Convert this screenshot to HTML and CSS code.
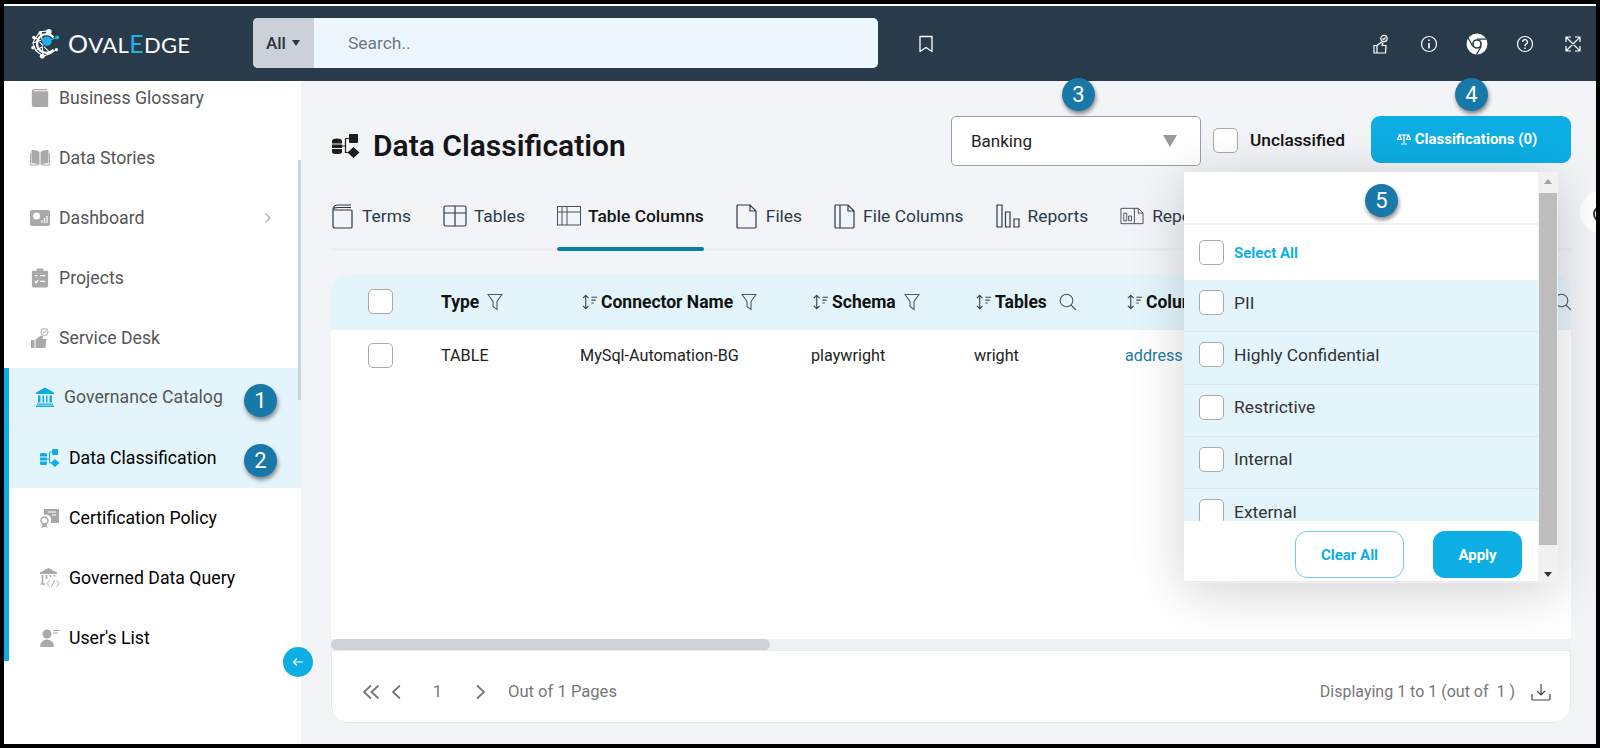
FILE: index.html
```html
<!DOCTYPE html>
<html lang="en">
<head>
<meta charset="utf-8">
<title>Data Classification</title>
<link rel="stylesheet" href="styles.css">
</head>
<body>
<div class="frame">
  <header class="topbar">
    <div class="logo">
      <svg class="logo-mark" viewBox="0 0 32 32" fill="none" stroke="#fff" stroke-width="1.2">
        <path d="M10 3 L5 9 L2 15 L5 23 L13 29 L21 26 L27 22 M10 3 L18 2 M5 9 L13 18 M2 15 L11 12 M5 23 L12 19 L13 29 M21 26 L14 19 M10 3 L12 12"/>
        <path d="M24 9 A10 10 0 1 0 24 22" stroke-width="2.4"/>
        <circle cx="17" cy="13" r="5" fill="#1fb0ea" stroke="none"/>
        <path d="M17 13 L28 9" stroke="#1fb0ea" stroke-width="1.4"/>
        <circle cx="28" cy="9" r="2" fill="#1fb0ea" stroke="none"/>
        <circle cx="19" cy="3" r="3" fill="#fff" stroke="none"/><circle cx="10" cy="4" r="2" fill="#fff" stroke="none"/>
        <circle cx="3" cy="9" r="1.8" fill="#fff" stroke="none"/><circle cx="2" cy="20" r="1.8" fill="#fff" stroke="none"/>
        <circle cx="12" cy="29" r="2.6" fill="#fff" stroke="none"/><circle cx="27" cy="22" r="1.8" fill="#fff" stroke="none"/>
      </svg>
      <span class="logo-text"><span class="logo-o">O</span>VAL<span class="logo-e">E</span>DGE</span>
    </div>
    <div class="search">
      <div class="search-scope">All <span class="caret"></span></div>
      <div class="search-input">Search..</div>
    </div>
    <svg class="bookmark" viewBox="0 0 16 18" fill="none" stroke="#fff" stroke-width="1.3"><path d="M2 1.5 H14 V16.5 L8 12.5 L2 16.5 Z" stroke-linejoin="round"/></svg>
    <div class="top-icons">
      <svg class="top-icon" viewBox="0 0 20 20" fill="none" stroke="#fff" stroke-width="1.2"><circle cx="13" cy="4.5" r="3.2"/><path d="M11.5 4.5 L12.7 5.7 L14.6 3.4"/><path d="M3 11.5 H6 V19 H3 Z M6 11.5 L10 8.5 L12 9.5 L11 11.5 H15 L14.5 19 H6"/></svg>
      <svg class="top-icon" viewBox="0 0 20 20" fill="none" stroke="#fff" stroke-width="1.2"><circle cx="10" cy="10" r="7.5"/><path d="M10 9 V14.5 M10 5.5 V7" stroke-width="1.6"/></svg>
      <svg class="top-icon chrome" viewBox="0 0 20 20"><circle cx="10" cy="10" r="9.5" fill="#fff"/><circle cx="10" cy="10" r="4.4" fill="#293a4a"/><circle cx="10" cy="10" r="2.9" fill="#fff"/><path d="M10 5.6 H18.5 M14 12 L9.5 19.5 M6.2 12.2 L2 4.5" stroke="#293a4a" stroke-width="1.1"/></svg>
      <svg class="top-icon" viewBox="0 0 20 20" fill="none" stroke="#fff" stroke-width="1.2"><circle cx="10" cy="10" r="7.5"/><path d="M7.6 8 A2.4 2.4 0 1 1 11 10.2 Q10 10.8 10 12.3 M10 13.6 V15" stroke-width="1.4"/></svg>
      <svg class="top-icon" viewBox="0 0 20 20" fill="none" stroke="#fff" stroke-width="1.2"><path d="M3 3 L17 17 M17 3 L3 17 M3 8 V3 H8 M12 3 H17 V8 M3 12 V17 H8 M17 12 V17 H12"/></svg>
    </div>
  </header>

  <div class="body">
    <nav class="sidebar">
      <div class="nav-clip">
        <div class="nav-list">
          <div class="nav-item"><svg class="nav-icon" viewBox="0 0 20 22"><path d="M1 4 Q1 1 4 1 H18 V2.5 H4 Q3 2.5 3 3.5 H19 V21 H3 Q1 21 1 19 Z" fill="#a9a9a9"/></svg><span>Business Glossary</span></div>
          <div class="nav-item"><svg class="nav-icon" viewBox="0 0 20 18"><path d="M9.5 3 Q6 .5 1.5 1 V14 Q6 14 9.5 16 Z M10.5 3 Q14 .5 18.5 1 V14 Q14 14 10.5 16 Z" fill="#a9a9a9"/><path d="M.5 4 V16 H8.5 M19.5 4 V16 H11.5" fill="none" stroke="#a9a9a9"/></svg><span>Data Stories</span></div>
          <div class="nav-item"><svg class="nav-icon" viewBox="0 0 20 16"><rect width="20" height="16" rx="2" fill="#a9a9a9"/><circle cx="6.5" cy="6" r="3.5" fill="#fff"/><path d="M12 13 V10 M14.5 13 V8 M17 13 V6" stroke="#fff" stroke-width="1.2"/></svg><span>Dashboard</span><svg class="nav-chevron" viewBox="0 0 8 12" fill="none" stroke="#a9a9a9" stroke-width="1.2"><path d="M1.5 1.5 L6 6 L1.5 10.5"/></svg></div>
          <div class="nav-item"><svg class="nav-icon" viewBox="0 0 18 21"><path d="M2 3 H5.5 V1.5 Q5.5 .5 6.5 .5 H11.5 Q12.5 .5 12.5 1.5 V3 H16 Q17.5 3 17.5 4.5 V19 Q17.5 20.5 16 20.5 H2 Q.5 20.5 .5 19 V4.5 Q.5 3 2 3 Z" fill="#a9a9a9"/><path d="M3.5 8 H6.5 M9 8 H14.5 M3.5 14 L5 15.5 L7 12.5 M9 14 H14.5" stroke="#fff" stroke-width="1.4" fill="none"/></svg><span>Projects</span></div>
          <div class="nav-item"><svg class="nav-icon" viewBox="0 0 20 20"><circle cx="14.5" cy="4" r="3.6" fill="none" stroke="#a9a9a9" stroke-width="1"/><path d="M12.8 4 L14 5.2 L16 2.8" fill="none" stroke="#a9a9a9"/><path d="M1 12 H4.5 V20 H1 Z M5.5 11.5 L11 7.5 L13.5 8.5 L12 11 H16.5 L15.5 20 H5.5 Z" fill="#a9a9a9"/></svg><span>Service Desk</span></div>
          <div class="nav-group">
            <div class="nav-item parent"><svg class="nav-icon" viewBox="0 0 20 20" fill="#0caee3"><path d="M10 .5 L19 5.5 V7 H1 V5.5 Z"/><path d="M3 8.5 H5.5 V15.5 H3 Z M7.5 8.5 H9 V15.5 H7.5 Z M11 8.5 H12.5 V15.5 H11 Z M14.5 8.5 H17 V15.5 H14.5 Z M2 16.5 H18 V17.8 H2 Z M1 18.5 H19 V20 H1 Z"/></svg><span>Governance Catalog</span></div>
            <div class="nav-item child active"><svg class="nav-icon" viewBox="0 0 20 18"><g fill="#0caee3"><rect x="0" y="4" width="7" height="12" rx="1.6"/><rect x="12" y="0" width="6" height="6" rx=".8"/><path d="M15 10 L19.5 14 L15 18 L10.5 14 Z"/></g><path d="M7 10 H9.5 M9.5 3 V14 H11 M9.5 3 H12" stroke="#0caee3" fill="none"/><path d="M0 8 H7 M0 12 H7" stroke="#e3f5fb"/></svg><span>Data Classification</span></div>
            <div class="nav-item child"><svg class="nav-icon" viewBox="0 0 20 20" fill="#a9a9a9"><path d="M4 1 H19 V15 H11 V10 A5 5 0 0 0 4 7 Z"/><path d="M8 4 H16 M12 7 H16" stroke="#fff" stroke-width="1.2"/><circle cx="4.5" cy="12.5" r="3.5" fill="none" stroke="#a9a9a9" stroke-width="1.4"/><path d="M2.5 16 L1.5 20 L4.5 18.5 L7.5 20 L6.5 16 Z"/></svg><span>Certification Policy</span></div>
            <div class="nav-item child"><svg class="nav-icon" viewBox="0 0 20 20"><path d="M8.5 0 L17 4.5 V6 H0 V4.5 Z" fill="#a9a9a9"/><path d="M2.5 7 V15 M6.5 7 V11 M10.5 7 V9 M14.5 7 V8.5 M.5 16 H5" stroke="#a9a9a9" stroke-width="1.6" fill="none"/><path d="M9.5 12.5 L7 15.5 L9.5 18.5 M16.5 12.5 L19 15.5 L16.5 18.5 M14.5 12 L11.5 19" stroke="#a9a9a9" fill="none"/></svg><span>Governed Data Query</span></div>
            <div class="nav-item child"><svg class="nav-icon" viewBox="0 0 20 18" fill="#a9a9a9"><circle cx="7" cy="5" r="4.5"/><path d="M0 18 Q0 11 7 10.5 Q14 11 14 18 Z"/><path d="M13 1.5 H20 M13 4 H18" stroke="#a9a9a9" fill="none"/></svg><span>User's List</span></div>
          </div>
        </div>
      </div>
      <div class="side-scroll"></div>
    </nav>

    <main class="main">
      <div class="title-row">
        <div class="title-group">
          <svg class="title-icon" viewBox="0 0 28 24"><g fill="#1d1d1d"><path d="M0 7 Q0 4.5 5 4.5 Q10 4.5 10 7 V9.5 H0 Z M0 10.5 H10 V14 H0 Z M0 15 H10 V18 Q10 20 5 20 Q0 20 0 18 Z"/><rect x="17" y="0" width="9" height="9" rx="1"/><path d="M21.5 13 L27.5 18.5 L21.5 24 L15.5 18.5 Z"/></g><path d="M10 12 H13.5 M13.5 4.5 V18.5 H16 M13.5 4.5 H17" fill="none" stroke="#1d1d1d" stroke-width="1.2"/></svg>
          <h1 class="title">Data Classification</h1>
        </div>
        <div class="select"><span>Banking</span><span class="select-arrow"></span></div>
        <label class="unclassified"><span class="check"></span><span>Unclassified</span></label>
        <button class="classify-btn"><svg class="scale" viewBox="0 0 14 12" fill="none" stroke="#fff" stroke-width="1.2"><path d="M7 1 V10 M4 11 H10 M1.5 2 H12.5 M2.5 2 L.5 6.5 H4.5 Z M11.5 2 L9.5 6.5 H13.5 Z"/></svg>Classifications (0)</button>
      </div>

      <div class="tabs">
        <div class="tab"><svg class="tab-icon i-terms" viewBox="0 0 21 25" fill="none" stroke="#2b3a4a" stroke-width="1.2"><path d="M1 6 Q1 1 6 1 H19 M1 6 Q1 3.5 6 3.5 H19 M1 6 H19 Q20 6 20 7 V23 Q20 24 19 24 H3 Q1 24 1 22 Z"/></svg>Terms</div>
        <div class="tab"><svg class="tab-icon i-tables" viewBox="0 0 24 22" fill="none" stroke="#2b3a4a" stroke-width="1.2"><rect x="1" y="1" width="22" height="20" rx="1.5"/><path d="M1 8 H23 M12 1 V21"/></svg>Tables</div>
        <div class="tab active"><svg class="tab-icon i-cols" viewBox="0 0 24 20" fill="none" stroke="#44505c" stroke-width="1"><rect x=".5" y=".5" width="23" height="18.5"/><path d="M.5 6 H23.5 M5 .5 V19 M10 .5 V19"/></svg>Table Columns</div>
        <div class="tab"><svg class="tab-icon i-files" viewBox="0 0 21 25" fill="none" stroke="#2b3a4a" stroke-width="1.2"><path d="M1 2 Q1 1 2 1 H14 L20 7 V23 Q20 24 19 24 H2 Q1 24 1 23 Z M14 1 V7 H20"/></svg>Files</div>
        <div class="tab"><svg class="tab-icon i-fcols" viewBox="0 0 21 25" fill="none" stroke="#2b3a4a" stroke-width="1.2"><path d="M1 2 Q1 1 2 1 H14 L20 7 V23 Q20 24 19 24 H2 Q1 24 1 23 Z M14 1 V7 H20 M6 1 V24"/></svg>File Columns</div>
        <div class="tab"><svg class="tab-icon i-rep" viewBox="0 0 24 24" fill="none" stroke="#2b3a4a" stroke-width="1.2"><path d="M1 1 H6 V23 H1 Z M9.5 8 H14 V23 H9.5 Z M18 15 H23 V23 H18 Z"/></svg>Reports</div>
        <div class="tab"><svg class="tab-icon i-rep" viewBox="0 0 25 18" fill="none" stroke="#44505c" stroke-width="1"><path d="M1 1 H19 L24 6 V17 H1 Z M19 1 V6 H24 M15 1 V17 M4 6 H7 V14 H4 Z M9 9 H12 V14 H9 Z"/></svg>Report Columns</div>
      </div>

      <section class="table-card">
        <div class="grid-scroll">
          <div class="row head">
            <div class="cell c0"><span class="check"></span></div>
            <div class="cell c1">Type<svg class="h-icon" viewBox="0 0 16 18" fill="none" stroke="#555" stroke-width="1.1"><path d="M1 1.5 H15 L10 8.5 V16.5 L6 13.5 V8.5 Z"/></svg></div>
            <div class="cell c2"><svg class="sort" viewBox="0 0 18 16" fill="none" stroke="#444" stroke-width="1.2"><path d="M5 1 V15 M2 4 L5 1 L8 4 M2 12 L5 15 L8 12 M11 3 H17 M11 6 H15.5 M11 9 H13.5"/></svg>Connector Name<svg class="h-icon" viewBox="0 0 16 18" fill="none" stroke="#555" stroke-width="1.1"><path d="M1 1.5 H15 L10 8.5 V16.5 L6 13.5 V8.5 Z"/></svg></div>
            <div class="cell c3"><svg class="sort" viewBox="0 0 18 16" fill="none" stroke="#444" stroke-width="1.2"><path d="M5 1 V15 M2 4 L5 1 L8 4 M2 12 L5 15 L8 12 M11 3 H17 M11 6 H15.5 M11 9 H13.5"/></svg>Schema<svg class="h-icon" viewBox="0 0 16 18" fill="none" stroke="#555" stroke-width="1.1"><path d="M1 1.5 H15 L10 8.5 V16.5 L6 13.5 V8.5 Z"/></svg></div>
            <div class="cell c4"><svg class="sort" viewBox="0 0 18 16" fill="none" stroke="#444" stroke-width="1.2"><path d="M5 1 V15 M2 4 L5 1 L8 4 M2 12 L5 15 L8 12 M11 3 H17 M11 6 H15.5 M11 9 H13.5"/></svg>Tables<svg class="h-icon search-i" viewBox="0 0 18 18" fill="none" stroke="#555" stroke-width="1.1"><circle cx="7.5" cy="7.5" r="6.3"/><path d="M12 12 L17 17"/></svg></div>
            <div class="cell c5"><svg class="sort" viewBox="0 0 18 16" fill="none" stroke="#444" stroke-width="1.2"><path d="M5 1 V15 M2 4 L5 1 L8 4 M2 12 L5 15 L8 12 M11 3 H17 M11 6 H15.5 M11 9 H13.5"/></svg>Column</div>
            <svg class="end-search" viewBox="0 0 18 18" fill="none" stroke="#555" stroke-width="1.1"><circle cx="7.5" cy="7.5" r="6.3"/><path d="M12 12 L17 17"/></svg>
          </div>
          <div class="row data">
            <div class="cell c0"><span class="check"></span></div>
            <div class="cell c1">TABLE</div>
            <div class="cell c2 nudge">MySql-Automation-BG</div>
            <div class="cell c3 nudge">playwright</div>
            <div class="cell c4 nudge">wright</div>
            <div class="cell c5 nudge link">address</div>
          </div>
        </div>
        <div class="hscroll"><div class="hthumb"></div></div>
        <footer class="pager">
          <svg class="pg-dbl" viewBox="0 0 18 16" fill="none" stroke="#777" stroke-width="1.8"><path d="M9 1.5 L2 8 L9 14.5 M16.5 1.5 L9.5 8 L16.5 14.5"/></svg>
          <svg class="pg-arrow" viewBox="0 0 10 16" fill="none" stroke="#777" stroke-width="1.8"><path d="M9 1.5 L2 8 L9 14.5"/></svg>
          <span class="pg-num">1</span>
          <svg class="pg-arrow" viewBox="0 0 10 16" fill="none" stroke="#777" stroke-width="1.8"><path d="M1 1.5 L8 8 L1 14.5"/></svg>
          <span class="pg-text">Out of 1 Pages</span>
          <span class="pg-info">Displaying 1 to 1 (out of&nbsp; 1 )</span>
          <svg class="pg-dl" viewBox="0 0 20 18" fill="none" stroke="#444" stroke-width="1.2"><path d="M10 1 V12 M6 8 L10 12 L14 8 M1 11 V16 Q1 17 2 17 H18 Q19 17 19 16 V11"/></svg>
        </footer>
      </section>
    </main>
  </div>

  <button class="collapse"><svg viewBox="0 0 12 10" fill="none" stroke="#fff" stroke-width="1.2"><path d="M11 5 H1.5 M5 1.5 L1.5 5 L5 8.5"/></svg></button>
  <div class="edge-round"></div>

  <aside class="popup">
    <div class="popup-body">
      <div class="popup-head"></div>
      <div class="popup-all"><span class="check"></span><span>Select All</span></div>
      <div class="popup-list">
        <div class="opt"><span class="check"></span><span>PII</span></div>
        <div class="opt"><span class="check"></span><span>Highly Confidential</span></div>
        <div class="opt"><span class="check"></span><span>Restrictive</span></div>
        <div class="opt"><span class="check"></span><span>Internal</span></div>
        <div class="opt"><span class="check"></span><span>External</span></div>
      </div>
      <div class="popup-foot">
        <button class="btn-clear">Clear All</button>
        <button class="btn-apply">Apply</button>
      </div>
    </div>
    <div class="vscroll"><span class="up"></span><span class="vthumb"></span><span class="down"></span></div>
  </aside>

  <span class="badge b1">1</span>
  <span class="badge b2">2</span>
  <span class="badge b3">3</span>
  <span class="badge b4">4</span>
  <span class="badge b5">5</span>
</div>
</body>
</html>
```

FILE: styles.css
```css
* { box-sizing: border-box; }
html, body { margin: 0; height: 100%; overflow: hidden; }
body { background: #000; font-family: Roboto, "Liberation Sans", sans-serif; color: #111; }
.frame {
  position: relative;
  width: 1592px;
  height: 740px;
  margin: 4px;
  display: flex;
  flex-direction: column;
  background: #fff;
  overflow: hidden;
}

/* top bar */
.topbar {
  height: 77px;
  flex: none;
  border-top: 2px solid #fff;
  background: #293a4a;
  display: flex;
  align-items: center;
}
.logo { display: flex; align-items: center; width: 249px; padding-left: 27px; }
.logo-mark { width: 30px; height: 30px; flex: none; }
.logo-text { margin-left: 7px; color: #fff; font-family: Lato, sans-serif; font-size: 22px; line-height: 24px; letter-spacing: .3px; white-space: nowrap; }
.logo-o { font-size: 25px; }
.logo-e { font-size: 25px; color: #1fb0ea; }
.search { display: flex; width: 625px; height: 50px; margin-bottom: 2px; border-radius: 5px; overflow: hidden; background: #eef6fd; }
.search-scope { width: 61px; background: #ccd1d9; display: flex; align-items: center; padding-left: 13px; font-size: 17px; font-weight: 500; color: #2b3440; }
.caret { margin-left: 6px; border: 4.5px solid transparent; border-top: 6px solid #2b3440; border-bottom: 0; }
.search-input { flex: 1; display: flex; align-items: center; padding-left: 34px; font-size: 17.4px; color: #6c7683; }
.bookmark { width: 16px; height: 18px; margin-left: 40px; }
.top-icons { margin-left: auto; display: flex; align-items: center; gap: 28px; padding-right: 13px; }
.top-icon { width: 20px; height: 20px; display: block; }
.top-icon.chrome { width: 22px; height: 22px; margin: 0 -1px; }

/* body */
.body { flex: 1; min-height: 0; display: flex; }

/* sidebar */
.sidebar { position: relative; width: 297px; flex: none; background: #fff; }
.nav-clip { height: 100%; overflow: hidden; }
.nav-list { margin-top: -13px; }
.nav-item { display: flex; align-items: center; height: 60px; padding: 0 0 1px 26px; font-size: 17.7px; font-weight: 400; color: #555; }
.nav-icon { width: 20px; height: 20px; margin-right: 9px; flex: none; }
.nav-chevron { width: 8px; height: 12px; margin-left: auto; margin-right: 29px; }
.nav-group { height: 293px; border-left: 5px solid #0caee3; }
.nav-item.parent { background: #e3f5fb; border-bottom: 1px solid #eaeef1; }
.nav-item.child { padding-left: 31px; color: #000; }
.nav-item.active { background: #e3f5fb; }
.side-scroll { position: absolute; right: 0; top: 79px; width: 3px; height: 240px; background: #cdd3dc; }

/* main */
.main { flex: 1; min-width: 0; background: #f2f4f8; padding: 35px 25px 21px 30px; display: flex; flex-direction: column; }
.title-row { display: flex; align-items: center; height: 50px; flex: none; }
.title-group { display: flex; align-items: center; padding-top: 10px; padding-left: 1px; }
.title-icon { width: 28px; height: 24px; flex: none; }
.title { margin: 0 0 0 13px; font-size: 30px; font-weight: 600; line-height: 36px; color: #151515; }
.select { margin-left: auto; width: 250px; height: 50px; background: #fff; border: 1px solid #9aa0aa; border-radius: 5px; display: flex; align-items: center; justify-content: space-between; padding: 0 23px 0 19px; font-size: 17px; color: #222; }
.select-arrow { border: 7px solid transparent; border-top: 12px solid #9a9a9a; border-bottom: 0; }
.unclassified { display: flex; align-items: center; margin: 0 0 2px 12px; font-size: 17.3px; font-weight: 500; color: #111; }
.unclassified .check { margin-right: 12px; }
.check { display: block; flex: none; width: 25px; height: 25px; background: #fff; border: 1px solid #a9a9a9; border-radius: 5px; }
.classify-btn { width: 200px; height: 47px; margin: 0 0 3px 26px; border: 0; border-radius: 9px; background: #0caee3; color: #fff; font: 700 15px Roboto, sans-serif; display: flex; align-items: center; justify-content: center; padding: 0 8px 2px 0; }
.scale { width: 14px; height: 12px; margin-right: 4px; }

/* tabs */
.tabs { position: relative; isolation: isolate; margin-top: 24px; height: 61px; flex: none; display: flex; overflow: hidden; width: 1240px; gap: 32px; }
.tabs::after { content: ""; position: absolute; left: 0; right: 0; bottom: 0; height: 3px; background: #eceef2; }
.tab { position: relative; z-index: 1; display: flex; align-items: center; height: 61px; white-space: nowrap; font-size: 17.4px; color: #2b3a4a; padding-bottom: 9px; }
.tab:first-child { padding-left: 1px; }
.tab-icon { width: 21px; height: 25px; margin-right: 8px; flex: none; }
.i-terms { margin-right: 9px; }
.i-tables { width: 24px; height: 22px; margin-right: 7px; }
.i-cols { width: 24px; height: 20px; margin-right: 7px; }
.i-files { width: 21px; height: 25px; margin-right: 9px; }
.i-fcols { width: 21px; height: 25px; margin-right: 8px; }
.i-rep { width: 24px; height: 24px; margin-right: 8px; }
.tab.active { color: #151515; font-weight: 500; }
.tab.active::after { content: ""; position: absolute; left: 0; right: 0; bottom: 0; height: 4px; background: #0a7ea8; border-radius: 2px; }

/* table */
.table-card { margin-top: 24px; flex: 1; min-height: 0; width: 1240px; display: flex; flex-direction: column; background: #fff; border-radius: 16px; overflow: hidden; }
.grid-scroll { flex: 1; min-height: 0; }
.row { display: flex; align-items: center; position: relative; }
.row.head { height: 55px; padding-bottom: 1px; background: #e3f5fb; font-size: 17.5px; font-weight: 700; color: #111; border-bottom: 1px solid #eef1f4; }
.row.data { height: 50px; font-size: 16.2px; color: #222; }
.cell { display: flex; align-items: center; white-space: nowrap; flex: none; }
.c0 { width: 110px; padding-left: 37px; }
.c1 { width: 140px; }
.c2 { width: 231px; }
.c3 { width: 163px; }
.c4 { width: 151px; }
.c5 { width: 200px; }
.link { color: #1a7da8; }
.nudge { margin-left: -1px; margin-right: 1px; }
.sort { width: 17px; height: 16px; margin-right: 3px; flex: none; }
.h-icon { width: 16px; height: 18px; margin-left: 8px; }
.h-icon.search-i { width: 18px; margin-left: 12px; }
.end-search { position: absolute; right: -1px; top: 18px; width: 18px; height: 18px; }
.hscroll { height: 11px; flex: none; background: #f0f1f3; }
.hthumb { width: 439px; height: 11px; background: #ced3db; border-radius: 6px; }
.pager { height: 73px; flex: none; display: flex; align-items: center; background: #fff; border: 1px solid #e6e8ec; border-radius: 0 0 16px 16px; padding: 10px 19px 0 30px; font-size: 16.6px; color: #777; }
.pg-dbl { width: 18px; height: 16px; margin-right: 11px; }
.pg-arrow { width: 10px; height: 16px; }
.pg-num { width: 75px; text-align: center; padding-right: 2px; }
.pg-text { margin-left: 22px; }
.pg-info { margin-left: auto; font-size: 16px; }
.pg-dl { width: 20px; height: 18px; margin-left: 16px; }

/* overlays */
.collapse { position: absolute; left: 279px; top: 643px; width: 30px; height: 30px; padding: 0; border: 0; border-radius: 50%; background: #0caee3; display: flex; align-items: center; justify-content: center; }
.collapse svg { width: 12px; height: 10px; }
.edge-round { position: absolute; right: -28px; top: 186px; width: 44px; height: 44px; border-radius: 50%; background: #fff; }
.edge-round::after { content: ""; position: absolute; left: 13px; top: 15px; width: 14px; height: 14px; border: 2px solid #333; border-radius: 50%; }
.popup { position: absolute; left: 1180px; top: 168px; width: 374px; height: 411px; display: flex; background: #f1f1f1; box-shadow: 0 8px 50px rgba(0,0,0,.18); }
.popup-body { width: 354px; height: 410px; display: flex; flex-direction: column; background: #fff; }
.popup-head { height: 53px; flex: none; border-bottom: 2px solid #f0f1f3; }
.popup-all { height: 55px; flex: none; display: flex; align-items: center; padding-left: 15px; gap: 10px; color: #0caee3; font-size: 15px; font-weight: 700; }
.popup-list { flex: 1; min-height: 0; overflow: hidden; background: #e3f5fb; }
.opt { height: 52.25px; flex: none; display: flex; align-items: center; padding-left: 15px; padding-bottom: 6px; gap: 10px; font-size: 17.4px; color: #333; border-bottom: 1px solid #d9e3e8; }
.popup-foot { height: 61px; flex: none; display: flex; align-items: flex-start; justify-content: flex-end; padding: 10px 16px 0 0; gap: 29px; background: #fff; border-bottom: 1px solid #e8eaee; }
.btn-clear, .btn-apply { height: 47px; border-radius: 12px; font: 700 15px Roboto, sans-serif; }
.btn-clear { width: 109px; background: #fff; border: 1px solid #6fc8ee; color: #0caee3; }
.btn-apply { width: 89px; background: #0caee3; border: 0; color: #fff; }
.vscroll { width: 20px; height: 100%; display: flex; flex-direction: column; align-items: center; padding-top: 7px; }
.up { border: 4px solid transparent; border-bottom: 5px solid #a3a3a3; border-top: 0; }
.vthumb { width: 18px; height: 352px; margin-top: 9px; background: #bdbdbd; }
.down { margin-top: 27px; border: 4px solid transparent; border-top: 5px solid #333; border-bottom: 0; }
.badge { position: absolute; width: 33px; height: 33px; border-radius: 50%; background: #1878a8; color: #fff; font-size: 22px; line-height: 33px; text-align: center; box-shadow: 1px 3px 4px rgba(0,0,0,.45); }
.b1 { left: 240px; top: 380px; }
.b2 { left: 240px; top: 440px; }
.b3 { left: 1058px; top: 74px; }
.b4 { left: 1451px; top: 74px; }
.b5 { left: 1361px; top: 180px; }
```
